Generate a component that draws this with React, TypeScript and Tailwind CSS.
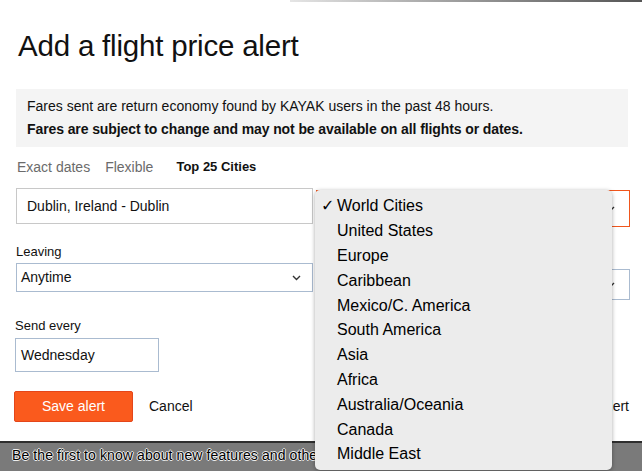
import React from "react";

const regions = [
  "World Cities",
  "United States",
  "Europe",
  "Caribbean",
  "Mexico/C. America",
  "South America",
  "Asia",
  "Africa",
  "Australia/Oceania",
  "Canada",
  "Middle East",
];

function Chevron() {
  return (
    <svg width="9" height="6" viewBox="0 0 9 6" className="shrink-0">
      <path d="M1 1l3.5 3.5L8 1" fill="none" stroke="#333" strokeWidth="1.4" />
    </svg>
  );
}

export default function App() {
  return (
    <div className="relative w-[642px] h-[471px] overflow-hidden bg-white flex flex-col font-['Liberation_Sans',Arial,sans-serif] text-[#111]">
      {/* Modal */}
      <div className="flex-1 flex flex-col pl-4 pr-[14px]">
        <div className="h-[2px] ml-[274px] -mr-[14px] bg-gradient-to-r from-[#e5e5e5] to-[#555]" />

        <h1 className="pt-[26px] text-[29.5px] leading-[35px] font-normal tracking-[-0.2px] ml-[2px]">
          Add a flight price alert
        </h1>

        <div className="mt-[26px] bg-[#f4f4f4] px-[11px] py-[6px] text-[14px] leading-[23px]">
          <p>Fares sent are return economy found by KAYAK users in the past 48 hours.</p>
          <p className="font-bold tracking-[-0.1px]">Fares are subject to change and may not be available on all flights or dates.</p>
        </div>

        {/* Tabs */}
        <div className="mt-[10px] flex items-center h-[20px] ml-px">
          <span className="text-[14px] text-[#6b6b6b]">Exact dates</span>
          <span className="text-[14px] text-[#6b6b6b] ml-[15px]">Flexible</span>
          <span className="text-[13px] font-bold ml-[23px]">Top 25 Cities</span>
        </div>

        {/* Cities row */}
        <div className="mt-[11px] flex items-start">
          <div className="w-[297px] h-[36px] border border-[#c8c8c8] flex items-center pl-[10px] text-[14px]">
            Dublin, Ireland - Dublin
          </div>
          <div className="flex-1 ml-[3px] mt-[2px] h-[37px] border border-[#f0561d] flex items-center justify-end pr-[14px] -mr-[2px]">
            <Chevron />
          </div>
        </div>

        {/* Leaving row */}
        <div className="mt-[17px] flex items-start">
          <div className="w-[297px]">
            <div className="text-[13px] leading-[16px]">Leaving</div>
            <div className="mt-[3px] h-[29px] border border-[#aabbd0] flex items-center justify-between pl-[4px] pr-[11px] text-[14px]">
              <span>Anytime</span>
              <Chevron />
            </div>
          </div>
          <div className="flex-1 ml-[3px] pt-[25px] -mr-[2px]">
            <div className="h-[31px] border border-[#aabbd0] flex items-center justify-end pr-[14px]">
              <Chevron />
            </div>
          </div>
        </div>

        {/* Send every */}
        <div className="mt-[18px] -ml-px text-[13px] leading-[16px]">Send every</div>
        <div className="mt-[4px] -ml-px w-[144px] h-[34px] border border-[#aabbd0] flex items-center pl-[5px] text-[14px]">
          Wednesday
        </div>

        {/* Actions */}
        <div className="mt-[19px] flex items-center -ml-[2px]">
          <button className="w-[119px] h-[31px] bg-[#fa5a1d] border border-[#e4461a] rounded-[2px] text-white text-[14px]">
            Save alert
          </button>
          <span className="ml-[16px] text-[14px]">Cancel</span>
          <span className="ml-auto text-[14px] -mr-[1px]">Delete alert</span>
        </div>
      </div>

      {/* Bottom strip */}
      <div className="h-[30px] shrink-0 bg-[#7a7a7a] border-t-2 border-[#2e2e2e] flex items-start pt-[2px] pl-[12px] overflow-hidden whitespace-nowrap">
        <span className="text-[14px] tracking-[0.1px] text-black [text-shadow:1px_0_0_#eee,-1px_0_0_#eee,0_1px_0_#eee,0_-1px_0_#eee]">
          Be the first to know about new features and other
        </span>
      </div>

      {/* Open select menu */}
      <div className="absolute left-[315px] top-[190px] w-[297px] h-[280px] bg-[#ececec] rounded-[5px] shadow-[0_1px_4px_rgba(0,0,0,0.35)] pt-[4px]">
        {regions.map((r, i) => (
          <div key={r} className="relative h-[24.8px] flex items-center pl-[22px] text-[16px] text-black">
            {i === 0 && (
              <span className="absolute left-[6px] font-['DejaVu_Sans',sans-serif] text-[16px]">✓</span>
            )}
            {r}
          </div>
        ))}
      </div>
    </div>
  );
}
